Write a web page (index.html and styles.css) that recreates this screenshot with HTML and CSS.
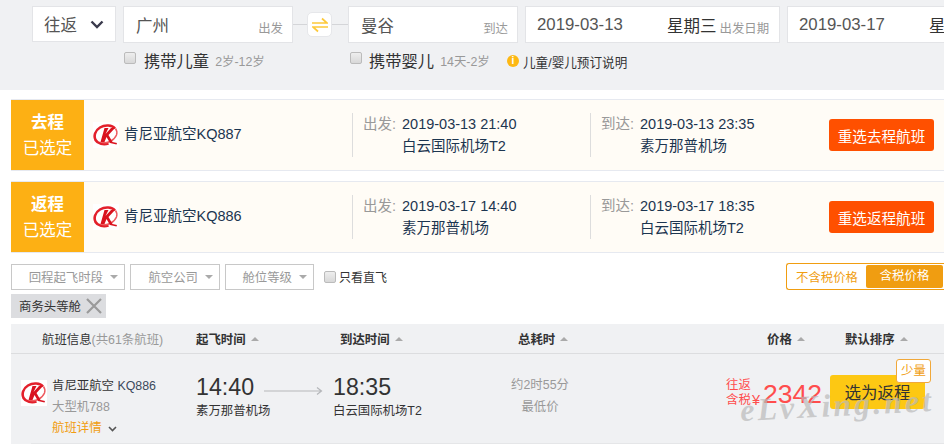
FILE: index.html
```html
<!DOCTYPE html>
<html lang="zh">
<head>
<meta charset="utf-8">
<title>航班</title>
<link rel="stylesheet" href="styles.css">
</head>
<body>
<svg class="defs" width="0" height="0">
  <symbol id="kq" viewBox="0 0 26 26">
    <rect width="26" height="26" fill="#fff"/>
    <path d="M22 6.500C19 3 12 2.500 7 5.500 2 8.500.5 14 2.500 18c2.200 3.800 8 5 13 3.500" fill="none" stroke="#e3202b" stroke-width="2.600"/>
    <path d="M8 20C14 22 21 19 23.500 13c.8-2.500.5-4.500-1-6.500" fill="none" stroke="#ee5a5f" stroke-width="1.500"/>
    <path d="M11.500 6h4l-3 6 5.500-6h4l-6.500 7 4 7 4.500 1-.5 1.500-6.500-1.500-3.500-6-2 5H7.500z" fill="#d9121f"/>
  </symbol>
</svg>
<header class="search">
  <div class="search-row">
    <div class="box trip"><span>往返</span>
      <svg class="chev" width="14" height="9" viewBox="0 0 14 9"><path d="M1.500 1.500 7 7l5.500-5.500" fill="none" stroke="#3a3a4c" stroke-width="2.400"/></svg>
    </div>
    <div class="box city"><span>广州</span><small>出发</small></div>
    <div class="swap-wrap">
      <div class="swap">
        <svg width="16" height="16" viewBox="0 0 16 16"><path d="M0 6h15L10 1.500M16 10H1l5 4.500" fill="none" stroke="#fdc93a" stroke-width="1.700"/></svg>
      </div>
    </div>
    <div class="box city"><span>曼谷</span><small>到达</small></div>
    <div class="box date"><span class="num">2019-03-13</span><b>星期三</b><small>出发日期</small></div>
    <div class="box date last"><span class="num">2019-03-17</span><b>星期日</b></div>
  </div>
  <div class="pax-row">
    <label class="pax first"><i class="check"></i><span>携带儿童</span><small>2岁-12岁</small></label>
    <label class="pax second"><i class="check"></i><span>携带婴儿</span><small>14天-2岁</small></label>
    <div class="note"><i class="info">i</i>儿童/婴儿预订说明</div>
  </div>
</header>

<main class="content">
  <section class="chosen">
    <div class="tag-side"><strong>去程</strong><span>已选定</span></div>
    <div class="airline"><svg class="logo" width="26" height="26"><use href="#kq"/></svg><span>肯尼亚航空KQ887</span></div>
    <div class="leg dep"><em>出发:</em><p>2019-03-13 21:40<br>白云国际机场T2</p></div>
    <div class="leg arr"><em>到达:</em><p>2019-03-13 23:35<br>素万那普机场</p></div>
    <button class="reselect">重选去程航班</button>
  </section>
  <section class="chosen">
    <div class="tag-side"><strong>返程</strong><span>已选定</span></div>
    <div class="airline"><svg class="logo" width="26" height="26"><use href="#kq"/></svg><span>肯尼亚航空KQ886</span></div>
    <div class="leg dep"><em>出发:</em><p>2019-03-17 14:40<br>素万那普机场</p></div>
    <div class="leg arr"><em>到达:</em><p>2019-03-17 18:35<br>白云国际机场T2</p></div>
    <button class="reselect">重选返程航班</button>
  </section>

  <div class="filters">
    <div class="drop w114">回程起飞时段<i></i></div>
    <div class="drop w90">航空公司<i></i></div>
    <div class="drop w89">舱位等级<i></i></div>
    <label class="direct"><i class="check"></i>只看直飞</label>
    <div class="tax"><span>不含税价格</span><span class="on">含税价格</span></div>
  </div>
  <div class="picked">商务头等舱
    <svg width="16" height="16" viewBox="0 0 16 16"><path d="M1 1l14 14M15 1 1 15" stroke="#9a9a9a" stroke-width="2.200"/></svg>
  </div>

  <div class="thead">
    <div class="th-info">航班信息<span>(共61条航班)</span></div>
    <div class="th b c-dep">起飞时间<i></i></div>
    <div class="th b c-arr">到达时间<i></i></div>
    <div class="th b c-dur">总耗时<i></i></div>
    <div class="th b c-price">价格<i></i></div>
    <div class="th b c-sort">默认排序<i></i></div>
  </div>

  <div class="row">
    <div class="r-info">
      <svg class="logo" width="26" height="26"><use href="#kq"/></svg>
      <div class="r-text">
        <div>肯尼亚航空 <span class="code">KQ886</span></div>
        <div class="grey">大型机788</div>
        <div class="detail">航班详情<svg width="9" height="6" viewBox="0 0 9 6"><path d="M1 1l3.500 3.500L8 1" fill="none" stroke="#555" stroke-width="1.600"/></svg></div>
      </div>
    </div>
    <div class="r-time c-dep"><b>14:40</b><span>素万那普机场</span></div>
    <svg class="arrow" width="59" height="8" viewBox="0 0 59 8"><path d="M0 4h57M53 .5 57.500 4 53 7.500" fill="none" stroke="#b5b7ba" stroke-width="1.200"/></svg>
    <div class="r-time c-arr2"><b>18:35</b><span>白云国际机场T2</span></div>
    <div class="r-dur"><div>约2时55分</div><div>最低价</div></div>
    <div class="r-price"><div class="taxnote">往返<br>含税</div><span class="yen">¥</span><span class="amount">2342</span></div>
    <div class="r-buy">
      <button class="pick">选为返程</button>
      <span class="few">少量</span>
    </div>
    <div class="mark">eLvXing.net</div>
  </div>
</main>
</body>
</html>
```
FILE: styles.css
```css
* { box-sizing: border-box; }
html, body { margin: 0; height: 445px; overflow: hidden; }
body {
  background: #fff;
  color: #333;
  font-family: "Liberation Sans", "Noto Sans CJK SC", sans-serif;
  font-size: 14.5px;
  width: 944px;
}
.defs { position: absolute; }
i, em { font-style: normal; }

.search { background: #f0f1f3; height: 90px; padding: 6px 0 0 32px; overflow: hidden; }
.search-row { display: flex; width: 1100px; }
.box {
  flex: none;
  background: #fff;
  border: 1px solid #e3e4e7;
  height: 37px;
  display: flex;
  align-items: center;
  position: relative;
  color: #555;
  font-size: 16.5px;
}
.box small { font-size: 12.4px; color: #999; margin-top: 6px; }
.trip { width: 84px; height: 36px; margin-right: 7px; padding: 0 11px; justify-content: space-between; }
.city { width: 170px; padding: 0 9px 0 12px; justify-content: space-between; }
.swap-wrap {
  flex: none;
  width: 55px;
  display: flex;
  justify-content: center;
  align-items: center;
  height: 37px;
  background: linear-gradient(#d4d5d8, #d4d5d8) center / 100% 1px no-repeat;
}
.swap {
  width: 25px;
  height: 25px;
  margin-right: 2px;
  background: #fff;
  border: 1px solid #e6e7ea;
  border-radius: 5px;
  display: flex;
  align-items: center;
  justify-content: center;
}
.city + .swap-wrap + .city { margin-right: 7px; }
.date { width: 255px; padding: 0 0 0 11px; margin-right: 7px; }
.num { width: 130px; color: #555; font-size: 16.8px; }
.date b { font-weight: 400; color: #333; font-size: 16.5px; margin-right: 3px; }
.pax-row { display: flex; align-items: center; margin-top: 3px; height: 28px; }
.pax { display: flex; align-items: center; color: #333; font-size: 16.3px; }
.pax small { font-size: 12.4px; color: #999; margin-left: 6px; margin-top: 2px; }
.first { margin-left: 92px; width: 226px; }
.second { width: 157px; }
.second .check { margin-right: 7px; }
.check {
  display: inline-block;
  flex: none;
  width: 12px;
  height: 12px;
  border: 1px solid #bbb;
  border-radius: 2px;
  background: linear-gradient(#eee, #d8d8d8);
  margin-right: 8px;
  margin-top: -4px;
}
.note { display: flex; align-items: center; font-size: 12.6px; color: #333; margin-top: 2px; }
.info {
  width: 12px;
  height: 12px;
  border-radius: 50%;
  background: #fdb813;
  color: #fff;
  font-size: 10px;
  font-weight: 700;
  line-height: 12px;
  text-align: center;
  margin-right: 4px;
}

.content { padding: 9px 0 0 11px; position: relative; }
.chosen {
  height: 72px;
  margin-bottom: 10px;
  background: #fffcf6;
  border-top: 1px solid #e6e9f0;
  border-bottom: 1px solid #e6e9f0;
  display: flex;
  align-items: center;
  color: #1c3550;
}
.tag-side {
  flex: none;
  width: 73px;
  height: 70px;
  background: #fdb014;
  color: #fff;
  display: flex;
  flex-direction: column;
  align-items: center;
  justify-content: center;
  gap: 4px;
}
.tag-side strong { font-size: 16.5px; line-height: 22px; font-weight: 700; }
.tag-side span { font-size: 16.5px; line-height: 22px; }
.airline { flex: none; width: 268px; padding-left: 9px; display: flex; align-items: center; gap: 5px; }
.airline span { margin-top: -6px; }
.logo { flex: none; }
.leg { flex: none; display: flex; height: 44px; align-items: flex-start; border-left: 1px solid #ddd; padding-left: 10px; white-space: nowrap; }
.leg em { color: #999; width: 39px; line-height: 22px; }
.leg p { margin: 0; line-height: 22px; }
.dep { width: 238px; }
.arr { width: 239px; }
.reselect {
  flex: none;
  width: 105px;
  height: 32px;
  background: #ff5000;
  color: #fff;
  border: 0;
  border-radius: 3px;
  font: 14.6px "Liberation Sans", "Noto Sans CJK SC", sans-serif;
  padding: 0;
}

.filters { display: flex; align-items: center; height: 27px; margin-top: 1px; }
.drop {
  flex: none;
  height: 26px;
  border: 1px solid #c8c8c8;
  color: #999;
  font-size: 12.4px;
  display: flex;
  align-items: center;
  justify-content: flex-end;
  padding-right: 6px;
  margin-right: 5px;
}
.drop i, .th i {
  display: inline-block;
  width: 0;
  height: 0;
  border-left: 4px solid transparent;
  border-right: 4px solid transparent;
}
.drop i { border-top: 4px solid #aaa; margin-left: 7px; }
.w114 { width: 114px; }
.w90 { width: 90px; }
.w89 { width: 89px; }
.direct { display: flex; align-items: center; font-size: 12px; color: #333; margin-left: 5px; }
.direct .check { margin: 0 3px 0 0; }
.tax {
  margin-left: auto;
  flex: none;
  width: 158px;
  height: 27px;
  border: 1px solid #f09d11;
  border-right: 0;
  border-radius: 3px 0 0 3px;
  display: flex;
  align-items: center;
  justify-content: space-between;
  font-size: 12.4px;
  color: #f09d11;
  padding: 0 1px 0 9px;
  white-space: nowrap;
}
.tax .on {
  background: #f09d11;
  color: #fff;
  width: 77px;
  height: 23px;
  line-height: 23px;
  text-align: center;
  border-radius: 2px;
}
.picked {
  width: 95px;
  height: 24px;
  margin-top: 4px;
  background: #dcdde0;
  color: #333;
  font-size: 12.4px;
  display: flex;
  align-items: center;
  padding-left: 8px;
  gap: 5px;
}

.thead {
  margin-top: 6px;
  height: 30px;
  background: #f0f1f3;
  border-bottom: 1px solid #dcdddf;
  display: flex;
  align-items: center;
  font-size: 12.4px;
  color: #333;
}
.th-info { flex: none; width: 185px; padding-left: 31px; white-space: nowrap; }
.th-info span { color: #999; }
.th { flex: none; font-weight: 700; font-size: 12.4px; }
.th i { border-bottom: 4px solid #aaa; margin-left: 5px; margin-bottom: 3px; }
.thead .c-dep { width: 144px; }
.thead .c-arr { width: 178px; }
.thead .c-dur { width: 249px; }
.thead .c-price { width: 78px; }

.row {
  position: relative;
  height: 90px;
  background: #f0f1f3;
  display: flex;
  align-items: flex-start;
  background-image: linear-gradient(#e5e6e8, #e5e6e8);
  background-size: calc(100% - 20px) 1px;
  background-position: 20px bottom;
  background-repeat: no-repeat;
  font-size: 12.4px;
}
.r-info { flex: none; width: 185px; display: flex; padding: 22px 0 0 10px; gap: 5px; white-space: nowrap; }
.r-info .logo { margin-top: 4px; }
.r-text div { line-height: 21px; height: 21px; }
.code { color: #3b4a5c; }
.grey { color: #999; }
.detail { color: #f09d11; display: flex; align-items: center; gap: 6px; }
.r-time { flex: none; display: flex; flex-direction: column; padding-top: 19px; white-space: nowrap; }
.r-time b { font-weight: 400; font-size: 23.2px; line-height: 28px; color: #333; }
.r-time span { line-height: 18px; margin-top: 1px; }
.row .c-dep { width: 68px; }
.arrow { flex: none; margin: 33px 10px 0 0; }
.c-arr2 { width: 177px; }
.r-dur { flex: none; width: 60px; margin-right: 156px; padding-top: 20px; color: #999; white-space: nowrap; }
.r-dur div { line-height: 22px; text-align: center; }
.r-price { flex: none; display: flex; align-items: flex-start; color: #ff4d4d; padding-top: 24px; width: 104px; white-space: nowrap; }
.taxnote { width: 26px; line-height: 15px; }
.yen { font-size: 14.5px; line-height: 17px; margin-top: 14px; width: 11px; }
.amount { font-size: 26.5px; line-height: 28px; margin-top: 2px; }
.r-buy { flex: none; position: relative; padding-top: 21px; }
.pick {
  width: 95px;
  height: 34px;
  background: #fdc813;
  border: 0;
  border-radius: 3px;
  color: #333;
  font: 16.5px "Liberation Sans", "Noto Sans CJK SC", sans-serif;
  padding: 0;
}
.few {
  position: absolute;
  top: 5px;
  right: -6px;
  width: 35px;
  height: 24px;
  background: #fff;
  border: 1px solid #f0a83a;
  border-radius: 3px;
  color: #f09d11;
  font-size: 12.4px;
  line-height: 22px;
  text-align: center;
}
.mark {
  position: absolute;
  left: 729px;
  top: 31px;
  font: italic 700 32px/40px "Liberation Serif", serif;
  letter-spacing: 3px;
  color: rgba(185, 185, 185, .7);
  transform: rotate(-3deg);
  white-space: nowrap;
}
```
